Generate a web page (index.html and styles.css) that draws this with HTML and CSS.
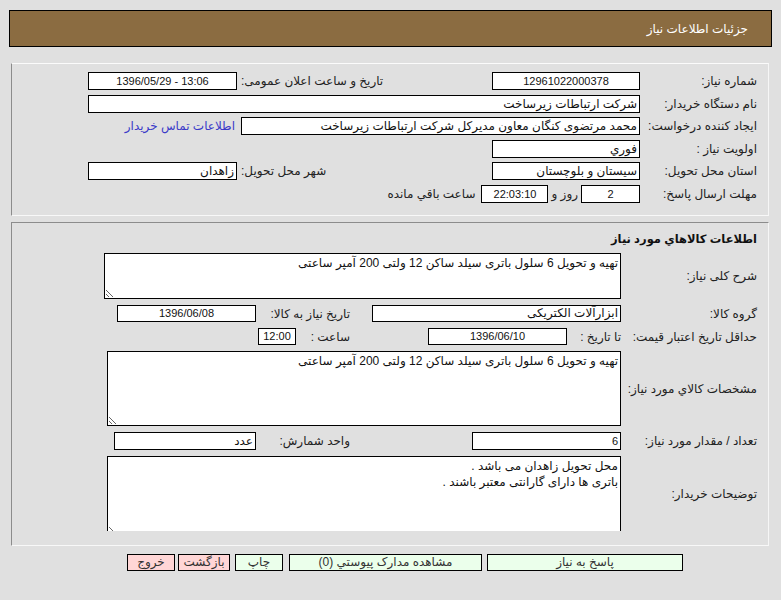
FILE: index.html
```html
<!DOCTYPE html>
<html lang="fa" dir="rtl">
<head>
<meta charset="utf-8">
<title>جزئیات اطلاعات نیاز</title>
<link rel="stylesheet" href="styles.css">
</head>
<body>
<div class="page">
  <div class="header">جزئیات اطلاعات نیاز</div>

  <div class="panel panel-top">
    <div class="grid1">
      <div class="lbl">شماره نیاز:</div>
      <div class="fld center num">12961022000378</div>
      <div class="lbl2">تاریخ و ساعت اعلان عمومی:</div>
      <div class="fld center num ltr">1396/05/29 - 13:06</div>

      <div class="lbl">نام دستگاه خریدار:</div>
      <div class="fld span3">شرکت ارتباطات زیرساخت</div>

      <div class="lbl">ایجاد کننده درخواست:</div>
      <div class="fld span2">محمد مرتضوی کنگان معاون مدیرکل شرکت ارتباطات زیرساخت</div>
      <div class="linkcell"><a class="link" href="#">اطلاعات تماس خریدار</a></div>

      <div class="lbl">اولویت نیاز :</div>
      <div class="fld">فوري</div>
      <div class="empty span2"></div>

      <div class="lbl">استان محل تحویل:</div>
      <div class="fld">سیستان و بلوچستان</div>
      <div class="lbl2">شهر محل تحویل:</div>
      <div class="fld">زاهدان</div>

      <div class="lbl">مهلت ارسال پاسخ:</div>
      <div class="deadline span3">
        <div class="fld center num days">2</div>
        <span class="txt">روز و</span>
        <div class="fld center num time">22:03:10</div>
        <span class="txt rest">ساعت باقي مانده</span>
      </div>
    </div>
  </div>

  <div class="panel panel-goods">
    <div class="title">اطلاعات کالاهاي مورد نیاز</div>
    <div class="grid2">
      <div class="lbl">شرح کلی نیاز:</div>
      <div class="cell"><textarea class="ta ta1" readonly>تهیه و تحویل 6 سلول باتری سیلد ساکن 12 ولتی 200 آمپر ساعتی</textarea></div>

      <div class="lbl">گروه کالا:</div>
      <div class="subrow">
        <div class="parta"><div class="fld wa">ابزارآلات الکتریکی</div></div>
        <div class="lblb">تاریخ نیاز به کالا:</div>
        <div class="fld center num wb1">1396/06/08</div>
      </div>

      <div class="lbl">حداقل تاریخ اعتبار قیمت:</div>
      <div class="subrow">
        <div class="parta">
          <span class="txt until">تا تاریخ :</span>
          <div class="fld center num wdate">1396/06/10</div>
        </div>
        <span class="txt hour">ساعت :</span>
        <div class="fld center num whour">12:00</div>
      </div>

      <div class="lbl">مشخصات کالاي مورد نیاز:</div>
      <div class="cell"><textarea class="ta ta2" readonly>تهیه و تحویل 6 سلول باتری سیلد ساکن 12 ولتی 200 آمپر ساعتی</textarea></div>

      <div class="lbl">تعداد / مقدار مورد نیاز:</div>
      <div class="subrow tall">
        <div class="parta"><div class="fld num wq">6</div></div>
        <div class="lblb">واحد شمارش:</div>
        <div class="fld wb2">عدد</div>
      </div>

      <div class="lbl">توضیحات خریدار:</div>
      <div class="cell clip"><textarea class="ta ta3" readonly>محل تحویل زاهدان می باشد .
باتری ها دارای گارانتی معتبر باشند .</textarea></div>
    </div>
  </div>

  <div class="buttons">
    <button class="btn green b1">پاسخ به نیاز</button>
    <button class="btn green b2">مشاهده مدارک پیوستي (0)</button>
    <button class="btn green b3">چاپ</button>
    <button class="btn pink b4">بازگشت</button>
    <button class="btn pink b5">خروج</button>
  </div>
</div>
</body>
</html>
```

FILE: styles.css
```css
html, body {
  margin: 0;
  padding: 0;
  background: #e0e0e0;
}
body {
  direction: rtl;
  font-family: "Liberation Sans", "DejaVu Sans", sans-serif;
  font-size: 12px;
  color: #222;
}
.page {
  padding-top: 10px;
}
.header {
  margin: 0 9px;
  height: 37px;
  box-sizing: border-box;
  background: #8b6c41;
  border: 1px solid #000;
  color: #fff;
  font-size: 12px;
  display: flex;
  align-items: center;
  padding-right: 23px;
}
.panel {
  margin: 0 12px 0 11px;
  border-left: 1px solid #8c8c8c;
  border-right: 1px solid #f6f6f6;
  border-bottom: 1px solid #f8f8f8;
  box-sizing: border-box;
}
.panel-top {
  margin-top: 16px;
  border-top: 1px solid #fbfbfb;
  padding: 8px 11px 12px 0;
  height: 153px;
}
.grid1 {
  display: grid;
  grid-template-columns: 113px 148px 247px 149px;
  column-gap: 4px;
  row-gap: 4.6px;
  grid-auto-rows: 18px;
}
.lbl {
  display: flex;
  align-items: center;
  text-align: right;
  white-space: nowrap;
}
.lbl2 {
  display: flex;
  align-items: center;
  justify-content: flex-end;
  white-space: nowrap;
}
.fld {
  background: #fff;
  border: 1px solid #000;
  box-sizing: border-box;
  height: 18px;
  line-height: 16px;
  padding: 0 2px;
  color: #111;
  white-space: nowrap;
  overflow: hidden;
  text-align: right;
}
.num {
  font-size: 11px;
}
.ltr {
  direction: ltr;
}
.center {
  text-align: center;
}
.span2 { grid-column: span 2; }
.span3 { grid-column: span 3; }
.linkcell {
  display: flex;
  align-items: center;
  padding-right: 2px;
}
.link {
  color: #3a3ac8;
  text-decoration: none;
  white-space: nowrap;
}
.deadline {
  display: flex;
  align-items: center;
  gap: 3px;
}
.days { width: 59px; }
.time { width: 67px; }
.txt {
  white-space: nowrap;
}
.rest {
  margin-right: 3px;
}

.panel-goods {
  margin-top: 6px;
  border-top: 1px solid #8c8c8c;
  padding: 6px 11px 14px 0;
  height: 324px;
}
.title {
  font-weight: bold;
  font-size: 11.5px;
  height: 20px;
  line-height: 20px;
  color: #111;
  margin-bottom: 4px;
}
.grid2 {
  display: grid;
  grid-template-columns: 132px 517px;
  column-gap: 4px;
  row-gap: 6px;
}
.cell {
  display: flex;
}
.ta {
  display: block;
  background: #fff;
  border: 1px solid #000;
  box-sizing: border-box;
  font-family: "Liberation Sans", "DejaVu Sans", sans-serif;
  font-size: 12px;
  line-height: 16px;
  color: #111;
  padding: 1px 2px;
  margin: 0;
  outline: none;
  overflow: hidden;
}
.ta1 { width: 517px; height: 46px; }
.ta2 { width: 514px; height: 75px; }
.ta3 { width: 514px; height: 80px; }
.clip {
  height: 75px;
  overflow: hidden;
}
.subrow {
  display: flex;
  align-items: center;
  height: 17px;
}
.subrow .fld {
  height: 17px;
  line-height: 15px;
}
.subrow.tall,
.subrow.tall .fld {
  height: 18px;
  line-height: 16px;
}
.parta {
  width: 271px;
  display: flex;
  align-items: center;
}
.wa { width: 249px; }
.wq { width: 149px; }
.until {
  width: 54px;
}
.wdate { width: 139px; }
.lblb {
  width: 94px;
  white-space: nowrap;
}
.wb1 { width: 139px; }
.wb2 { width: 142px; }
.hour {
  width: 54px;
}
.whour { width: 38px; }

.buttons {
  display: flex;
  gap: 5px;
  padding-right: 98px;
  margin-top: 8px;
}
.btn {
  height: 17px;
  box-sizing: border-box;
  border: 1px solid #000;
  font-family: "Liberation Sans", "DejaVu Sans", sans-serif;
  font-size: 12px;
  color: #333;
  padding: 0;
  line-height: 15px;
  margin: 0;
}
.green { background: #ebffeb; }
.pink { background: #ffd6d6; }
.b1 { width: 196px; }
.b2 { width: 193px; }
.b3 { width: 48px; margin-right: 1px; }
.b4 { width: 52px; }
.b5 { width: 48px; margin-right: -2px; }
```
